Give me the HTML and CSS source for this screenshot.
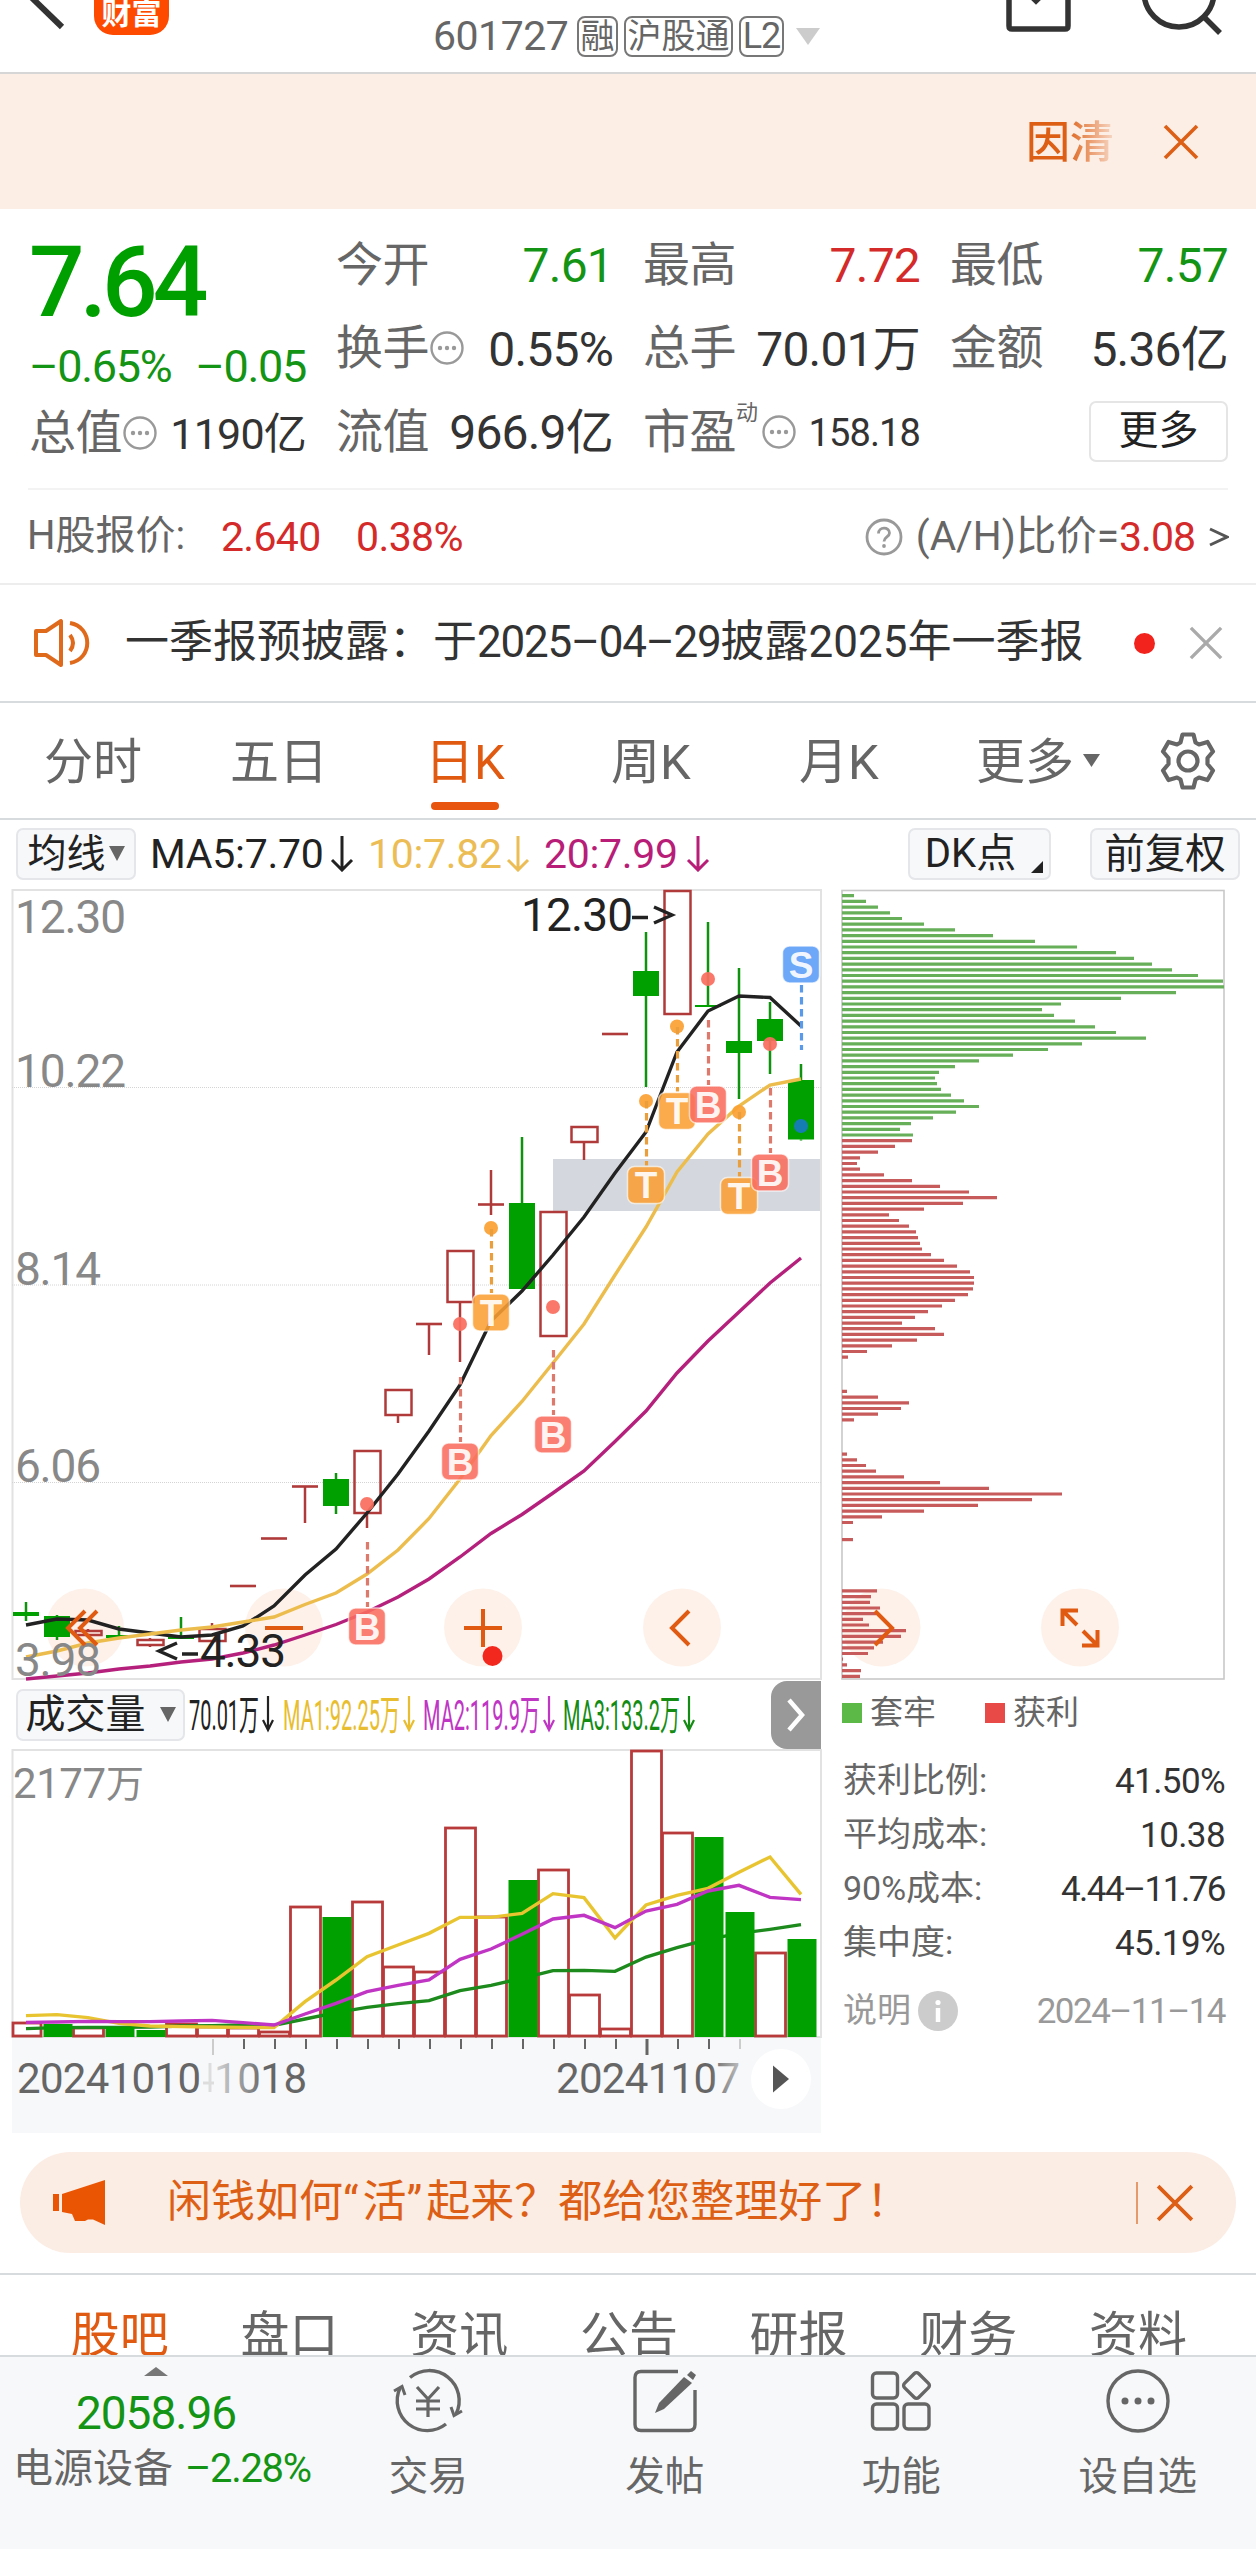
FILE: index.html
```html
<!DOCTYPE html>
<html lang="zh-CN">
<head>
<meta charset="utf-8">
<title>601727</title>
<link rel="stylesheet" href="styles.css">
</head>
<body>
<svg class="defs" aria-hidden="true">
  <symbol id="i-more" viewBox="0 0 34 34"><circle cx="17" cy="17" r="15.5" fill="none" stroke="#999" stroke-width="2.4"/><circle cx="10" cy="17" r="2.2" fill="#999"/><circle cx="17" cy="17" r="2.2" fill="#999"/><circle cx="24" cy="17" r="2.2" fill="#999"/></symbol>
  <symbol id="i-close" viewBox="0 0 36 36"><path d="M2 2L34 34M34 2L2 34" fill="none" stroke="currentColor" stroke-width="3.6"/></symbol>
  <symbol id="i-down" viewBox="0 0 10 10" preserveAspectRatio="none"><path d="M0 0H10L5 10Z" fill="currentColor"/></symbol>
  <symbol id="i-arrow" viewBox="0 0 24 36"><path d="M12 0V33M2 24L12 34L22 24" fill="none" stroke="currentColor" stroke-width="3"/></symbol>
</svg>

<header class="topbar">
  <svg class="back" viewBox="0 0 70 40"><path d="M30 -4L62 27" stroke="#333" stroke-width="6" fill="none"/></svg>
  <span class="logo">财富</span>
  <div class="code">
    <span class="num">601727</span><span class="tag t1">融</span><span class="tag t2">沪股通</span><span class="tag t3">L2</span>
    <svg class="caret"><use href="#i-down"/></svg>
  </div>
  <svg class="actions" viewBox="0 0 230 40" fill="none" stroke="#333" stroke-width="5.500"><path d="M9 -4V26Q9 29 12 29H65Q68 29 68 26V-4"/><path d="M31 -3L36 2L41 -3" stroke-width="4"/><circle cx="179" cy="-8" r="35"/><path d="M203 16L220 33"/></svg>
</header>

<div class="ticker"><span class="ticker-text">因清</span><svg class="close"><use href="#i-close"/></svg></div>

<section class="quote">
  <div class="col">
    <div class="price">7.64</div>
    <div class="change"><span>–0.65%</span><span>–0.05</span></div>
    <div class="cell"><span class="lab">总值<svg class="info"><use href="#i-more"/></svg></span><span class="val v41">1190亿</span></div>
  </div>
  <div class="col">
    <div class="cell"><span class="lab">今开</span><span class="val green">7.61</span></div>
    <div class="cell"><span class="lab">换手<svg class="info"><use href="#i-more"/></svg></span><span class="val">0.55%</span></div>
    <div class="cell"><span class="lab">流值</span><span class="val">966.9亿</span></div>
  </div>
  <div class="col">
    <div class="cell"><span class="lab">最高</span><span class="val red">7.72</span></div>
    <div class="cell"><span class="lab">总手</span><span class="val">70.01万</span></div>
    <div class="cell"><span class="lab">市盈<sup>动</sup><svg class="info"><use href="#i-more"/></svg></span><span class="val v38">158.18</span></div>
  </div>
  <div class="col">
    <div class="cell"><span class="lab">最低</span><span class="val green">7.57</span></div>
    <div class="cell"><span class="lab">金额</span><span class="val">5.36亿</span></div>
    <div class="cell end"><button class="more">更多</button></div>
  </div>
</section>

<section class="hshare">
  <span class="h-lab">H股报价:</span><span class="red h-a">2.640</span><span class="red h-b">0.38%</span>
  <svg class="help" viewBox="0 0 38 38"><circle cx="19" cy="19" r="17" fill="none" stroke="#999" stroke-width="2.8"/><path d="M13.5 15.5C13.5 8.500 24.500 8.500 24.500 15C24.500 19 19 19 19 23.500" fill="none" stroke="#999" stroke-width="2.800"/><circle cx="19" cy="28" r="1.900" fill="#999"/></svg>
  <span class="h-ratio">(A/H)比价=</span><span class="red h-c">3.08</span>
  <svg class="gt" viewBox="0 0 20 20"><path d="M1 2L18 10L1 18" fill="none" stroke="#555" stroke-width="3"/></svg>
</section>

<section class="notice">
  <svg class="speaker" viewBox="0 0 58 50" fill="none" stroke="#e06a1c" stroke-width="4" stroke-linejoin="round"><path d="M3 13H13L28 3V47L13 37H3Z"/><path d="M37 17Q43 25 37 33" stroke-width="4"/><path d="M37 5C60 9 60 41 37 45"/></svg>
  <span class="n-text">一季报预披露：于<span class="date">2025–04–29</span>披露<span class="year">2025</span>年一季报</span>
  <i class="dot"></i><svg class="n-close"><use href="#i-close"/></svg>
</section>

<nav class="tabs">
  <span class="p1">分时</span><span class="p2">五日</span><span class="p3 on">日K</span><span class="p4">周K</span><span class="p5">月K</span><span class="p6">更多</span><svg class="t-caret"><use href="#i-down"/></svg>
  <svg class="gear" viewBox="0 0 60 60" fill="none" stroke="#666" stroke-width="4.200" stroke-linejoin="round"><path d="M24.500 3.500H35.500L37.500 11.500L41 13.500L49.500 11L55 20.500L49.500 27V33L55 39.500L49.500 49L41 46.500L37.500 48.500L35.500 56.500H24.500L22.500 48.500L19 46.500L10.500 49L5 39.500L10.500 33V27L5 20.500L10.500 11L19 13.500L22.500 11.500Z"/><circle cx="30" cy="30" r="9.500"/></svg>
</nav>

<div class="mabar">
  <button class="chip c1">均线<svg><use href="#i-down"/></svg></button>
  <span class="ma k">MA5:7.70<svg><use href="#i-arrow"/></svg></span>
  <span class="ma y">10:7.82<svg><use href="#i-arrow"/></svg></span>
  <span class="ma m">20:7.99<svg><use href="#i-arrow"/></svg></span>
  <button class="chip c2">DK点<svg class="corner" viewBox="0 0 12 12"><path d="M12 0V12H0Z" fill="#222"/></svg></button>
  <button class="chip c3">前复权</button>
</div>

<main class="charts">
  <div class="left">
    <svg id="kline" width="830" height="793" viewBox="0 888 830 793"></svg>
    <div class="volbar">
      <button class="chip c4">成交量<svg><use href="#i-down"/></svg></button>
      <svg class="volma" width="520" height="68" viewBox="186 1681 520 68">
        <g font-size="42">
          <g color="#222"><text x="189" y="1730" textLength="70" lengthAdjust="spacingAndGlyphs" fill="#222">70.01万</text><path class="va" d="M268 1696V1729M263 1720L268 1730L273 1720"/></g>
          <g color="#e8be30"><text x="283" y="1730" textLength="117" lengthAdjust="spacingAndGlyphs" fill="#e8be30">MA1:92.25万</text><path class="va" d="M409 1696V1729M404 1720L409 1730L414 1720"/></g>
          <g color="#bf35c4"><text x="423" y="1730" textLength="117" lengthAdjust="spacingAndGlyphs" fill="#bf35c4">MA2:119.9万</text><path class="va" d="M549 1696V1729M544 1720L549 1730L554 1720"/></g>
          <g color="#148c14"><text x="563" y="1730" textLength="117" lengthAdjust="spacingAndGlyphs" fill="#148c14">MA3:133.2万</text><path class="va" d="M689 1696V1729M684 1720L689 1730L694 1720"/></g>
        </g>
      </svg>
      <button class="next"><svg width="20" height="34" viewBox="0 0 20 34"><path d="M3 2L16 17L3 32" fill="none" stroke="#fff" stroke-width="4.500"/></svg></button>
    </div>
    <svg id="volume" width="830" height="385" viewBox="0 1749 830 385"></svg>
  </div>
  <aside class="right">
    <svg id="chips" width="426" height="793" viewBox="830 888 426 793"></svg>
    <div class="legend"><i class="g"></i><span>套牢</span><i class="r"></i><span>获利</span></div>
    <dl class="facts">
      <div><dt>获利比例:</dt><dd>41.50%</dd></div>
      <div><dt>平均成本:</dt><dd>10.38</dd></div>
      <div><dt>90%成本:</dt><dd class="tight">4.44–11.76</dd></div>
      <div><dt>集中度:</dt><dd>45.19%</dd></div>
      <div class="dim"><dt>说明<svg width="40" height="40" viewBox="0 0 40 40"><circle cx="20" cy="20" r="20" fill="#ccc"/><circle cx="20" cy="11.500" r="2.600" fill="#fff"/><path d="M20 17V31" stroke="#fff" stroke-width="4.500"/></svg></dt><dd class="tight">2024–11–14</dd></div>
    </dl>
  </aside>
</main>

<div class="promo">
  <svg class="horn" viewBox="0 0 54 46" fill="#ea5504"><path d="M0 14H6V31H0ZM9 14L52 0V45L40 39.500H35L32 41H22L19 34L9 32Z"/></svg>
  <span class="p-text">闲钱如何<span class="q">“</span>活<span class="q">”</span>起来？都给您整理好了！</span>
  <i class="bar"></i><svg class="p-close"><use href="#i-close"/></svg>
</div>

<nav class="subtabs"><span class="on">股吧</span><span>盘口</span><span>资讯</span><span>公告</span><span>研报</span><span>财务</span><span>资料</span></nav>

<footer class="dock">
  <div class="index">
    <svg class="up" viewBox="0 0 24 9"><path d="M0 9L12 0L24 9Z" fill="#777"/></svg>
    <div class="i-val">2058.96</div>
    <div class="i-name">电源设备<span>–2.28%</span></div>
  </div>
  <div class="item"><svg viewBox="0 0 76 66" fill="none" stroke="#666" stroke-width="3.400"><path d="M20 9.500A30 30 0 0 1 66 46M56 56A30 30 0 0 1 10 20"/><path d="M4 23L12 18.500L15 27M72 43L64 47.500L61 39" stroke-width="3"/><path d="M27 19L38 31L49 19M38 31V49M26 33H50M26 41H50" stroke-width="3.200"/></svg><span>交易</span></div>
  <div class="item"><svg viewBox="0 0 76 66" fill="none" stroke="#666" stroke-width="3.400"><path d="M51 3.500H14Q8 3.500 8 9.500V56.500Q8 62.500 14 62.500H62Q68 62.500 68 56.500V22"/><path d="M57 9L65 15L37 41L28 45L32 35Z" fill="#666" stroke="none"/><path d="M60 7L64 3L69 7L66 12Z" fill="#666" stroke="none"/></svg><span>发帖</span></div>
  <div class="item"><svg viewBox="0 0 76 66" fill="none" stroke="#666" stroke-width="3.400"><rect x="9.500" y="5" width="25" height="25" rx="4"/><rect x="9.500" y="36" width="25" height="25" rx="4"/><rect x="41" y="36" width="25" height="25" rx="4"/><rect x="43.500" y="7.500" width="20" height="20" rx="3" transform="rotate(45 53.500 17.500)"/></svg><span>功能</span></div>
  <div class="item"><svg viewBox="0 0 76 66" fill="none" stroke="#666" stroke-width="3.400"><circle cx="38" cy="33" r="30"/><g fill="#666" stroke="none"><circle cx="25" cy="33" r="3.500"/><circle cx="38" cy="33" r="3.500"/><circle cx="51" cy="33" r="3.500"/></g></svg><span>设自选</span></div>
</footer>
<script src="chart.js"></script>
</body>
</html>
```
FILE: styles.css
```css
* { box-sizing: border-box; }
body { margin: 0; width: 1256px; height: 2549px; overflow: hidden; background: #fff; color: #333; font-family: Roboto, "Noto Sans CJK SC", sans-serif; }
svg { display: block; flex: none; }
span { white-space: nowrap; }
button { font: inherit; color: #222; padding: 0; }
.defs { position: absolute; width: 0; height: 0; }
.red { color: #d42a2a; }
.green { color: #149414; }

.topbar { height: 74px; border-bottom: 2px solid #d6d6d6; display: flex; align-items: flex-start; overflow: hidden; }
.back { width: 70px; height: 40px; }
.logo { margin-left: 24px; width: 75px; height: 35px; background: #fd4a00; border-radius: 0 0 19px 19px; color: #fff; font-weight: 700; font-size: 30px; line-height: 27px; text-align: center; }
.code { margin-left: 264px; display: flex; align-items: center; height: 73px; font-size: 41px; color: #666; line-height: 73px; }
.num { width: 144px; letter-spacing: -0.5px; }
.tag { height: 41px; line-height: 36px; border: 2px solid #777; border-radius: 8px; font-size: 34px; text-align: center; margin-right: 6px; }
.t1 { width: 41px; }
.t2 { width: 109px; }
.t3 { width: 45px; font-size: 36px; letter-spacing: -1px; }
.caret { width: 24px; height: 17px; color: #ccc; margin-left: 6px; }
.actions { width: 230px; height: 40px; margin-left: 180px; }

.ticker { height: 135px; background: #fceee5; display: flex; align-items: center; color: #dd5f16; padding-left: 1026px; }
.ticker-text { font-size: 44px; font-weight: 500; width: 88px; margin-bottom: 5px; background: linear-gradient(90deg, #dd5f16 45%, rgba(221,95,22,0.15)); -webkit-background-clip: text; color: transparent; }
.close { width: 36px; height: 36px; margin-left: 49px; }

.quote { height: 281px; margin: 0 28px; padding: 14px 0 0 1px; display: flex; gap: 31px; border-bottom: 2px solid #f3f3f3; }
.col { width: 277px; flex: none; margin-right: -1px; }
.col:last-child { width: 278px; }
.price { height: 115px; line-height: 120px; font-size: 98px; font-weight: 500; letter-spacing: -5px; color: #009f00; }
.change { height: 53px; line-height: 58px; font-size: 45px; letter-spacing: -1.300px; color: #149414; display: flex; justify-content: space-between; }
.cell { height: 83.5px; display: flex; align-items: center; justify-content: space-between; font-size: 47px; line-height: 60px; }
.end { justify-content: flex-end; }
.lab { color: #666; display: flex; align-items: center; letter-spacing: -0.5px; }
.info { width: 34px; height: 34px; margin: 0 0 0 1px; }
sup { font-size: 22px; line-height: 22px; align-self: flex-start; width: 24px; }
sup + .info { margin-left: 2px; }
.val { font-size: 48px; letter-spacing: -0.8px; padding-top: 3px; }
.v41 { font-size: 43px; }
.v38 { font-size: 38px; letter-spacing: -0.9px; }
.more { width: 139px; height: 61px; border: 2px solid #e5e5e5; border-radius: 7px; background: #fff; font-size: 40px; line-height: 54px; padding-bottom: 1px; }

.hshare { height: 95px; border-bottom: 2px solid #ededed; display: flex; align-items: center; padding: 0 27px; font-size: 40px; line-height: 60px; color: #666; }
.h-lab { width: 194px; padding-bottom: 2px; }
.h-a { width: 135px; font-size: 41px; letter-spacing: -0.7px; }
.h-b { flex: 1; font-size: 41px; letter-spacing: -0.6px; }
.help { width: 38px; height: 38px; margin-right: 13px; }
.h-ratio { font-size: 40.5px; padding-bottom: 2px; }
.h-c { font-size: 41px; letter-spacing: -1px; margin-right: 14px; }
.gt { width: 20px; height: 20px; }

.notice { height: 118px; border-bottom: 2px solid #d8dbdd; display: flex; align-items: center; padding: 0 33px; }
.speaker { width: 58px; height: 50px; }
.n-text { margin-left: 34px; width: 1010px; font-size: 44px; line-height: 60px; padding-bottom: 2px; }
.date { letter-spacing: -1.200px; }
.dot { width: 21px; height: 21px; border-radius: 50%; background: #f2231d; flex: none; }
.n-close { width: 34px; height: 34px; color: #aaa; margin-left: 34px; }

.tabs { height: 117px; border-bottom: 2px solid #d8dbdd; display: flex; align-items: center; padding-left: 44px; font-size: 49px; color: #666; }
.tabs span { flex: none; line-height: 120px; height: 115px; }
.p1 { width: 186px; }
.p2 { width: 195px; }
.p3 { width: 186px; position: relative; }
.p4 { width: 188px; }
.p5 { width: 177px; }
.p6 { width: 107px; }
.on { color: #e15a11; }
.p3::after { content: ""; position: absolute; left: 6px; bottom: 8px; width: 68px; height: 8px; border-radius: 4px; background: #e8550f; }
.t-caret { width: 17px; height: 13px; color: #666; }
.gear { width: 60px; height: 60px; margin-left: 58px; }

.mabar { height: 68px; display: flex; align-items: center; padding: 0 16px; font-size: 41px; }
.chip { height: 52px; border: 2px solid #e4e6e9; border-radius: 7px; background: #f6f8fa; display: flex; align-items: center; justify-content: center; flex: none; position: relative; line-height: 46px; padding-bottom: 1px; white-space: nowrap; }
.c1 { width: 120px; font-size: 39px; margin-right: 14px; }
.chip svg { color: #666; width: 16px; height: 15px; margin-left: 3px; }
.c2 { width: 143px; font-size: 40px; padding-right: 18px; margin-left: auto; margin-right: 39px; }
.chip .corner { position: absolute; right: 6px; bottom: 5px; width: 12px; height: 12px; }
.c3 { width: 150px; font-size: 40.500px; }
.ma { display: flex; align-items: center; line-height: 70px; letter-spacing: -0.300px; }
.ma svg { width: 24px; height: 36px; margin-left: auto; margin-right: 14px; }
.k { width: 218px; color: #222; }
.y { width: 176px; color: #ecbd55; }
.m { width: 180px; color: #b81d78; }

.charts { display: flex; height: 1247px; }
.left { width: 830px; }
.right { width: 426px; }
.volbar { display: flex; align-items: center; height: 68px; padding-left: 16px; }
.c4 { width: 169px; font-size: 40px; margin-right: 1px; }
.c4 svg { margin-left: 14px; }
.va { fill: none; stroke: currentColor; stroke-width: 2.2; }
.next { width: 50px; height: 68px; margin-left: 65px; background: #999; border: 0; border-radius: 16px 0 0 16px; display: flex; align-items: center; justify-content: center; }

.legend { display: flex; align-items: center; height: 64px; padding-left: 12px; font-size: 33px; color: #666; }
.legend i { width: 20px; height: 20px; margin-right: 8px; }
.legend span { width: 115px; line-height: 50px; padding-bottom: 1px; }
.g { background: #5cb948; }
.r { background: #e84a48; }
.facts { margin: 9px 31px 0 13px; }
.facts div { display: flex; justify-content: space-between; align-items: center; height: 54px; font-size: 34px; }
.facts dt { color: #666; display: flex; align-items: center; line-height: 50px; padding-bottom: 2px; }
.facts dd { margin: 0; font-size: 35px; letter-spacing: -0.6px; }
.facts .tight { letter-spacing: -1.500px; }
.facts .dim { margin-top: 14px; }
.facts .dim dt, .facts .dim dd { color: #999; }
.dim svg { margin: 2px 0 0 7px; }

.promo { height: 101px; margin: 17px 20px 0; border-radius: 51px; background: #fcede4; color: #dd5f16; display: flex; align-items: center; padding-left: 33px; }
.horn { width: 54px; height: 46px; }
.p-text { margin-left: 60px; width: 969px; font-size: 44px; line-height: 60px; padding-bottom: 2px; }
.q { letter-spacing: 4px; }
.bar { width: 2px; height: 42px; background: #e59a6c; }
.p-close { width: 38px; height: 38px; margin-left: 18px; }

.subtabs { margin-top: 20px; height: 84px; border-top: 2px solid #d8dbdd; border-bottom: 2px solid #d8dbdd; overflow: hidden; display: flex; padding-left: 35px; font-size: 49px; line-height: 122px; color: #666; }
.subtabs span { width: 169.700px; text-align: center; flex: none; }

.dock { height: 192px; background: #f7f8fa; display: flex; }
.index { width: 310px; padding-top: 10px; }
.up { width: 24px; height: 9px; margin-left: 144px; }
.i-val { height: 73px; line-height: 74px; font-size: 46px; letter-spacing: -1px; color: #149414; text-align: center; padding-left: 2px; }
.i-name { margin-left: 13px; height: 40px; line-height: 40px; font-size: 40px; color: #666; white-space: nowrap; }
.i-name span { color: #149414; margin-left: 12px; letter-spacing: -1.300px; }
.item { width: 236.500px; display: flex; flex-direction: column; align-items: center; font-size: 39.500px; color: #666; padding-top: 11px; }
.item svg { width: 76px; height: 66px; }
.item span { margin-top: 18px; line-height: 50px; }
```
FILE: chart.js
```js
const NS = 'http://www.w3.org/2000/svg';
const X = i => 26 + 31 * i;
const add = (root, tag, attrs, text) => {
  const el = document.createElementNS(NS, tag);
  for (const k in attrs) el.setAttribute(k, attrs[k]);
  if (text) el.textContent = text;
  root.appendChild(el);
  return el;
};
const line = (root, ys, color, w) => add(root, 'polyline', {
  points: ys.map((y, i) => X(i) + ',' + y).join(' '), fill: 'none', stroke: color, 'stroke-width': w
});
const RED = '#b03a3a', GREEN = '#00a000';

/* Daily candles */
const k = document.getElementById('kline');
add(k, 'rect', { x: 12.5, y: 890, width: 808.5, height: 789, fill: 'none', stroke: '#e2e2e2', 'stroke-width': 2 });
[1087.5, 1285, 1482.5].forEach(y => add(k, 'path', { d: `M12 ${y}H821`, stroke: '#d4d4d4', 'stroke-width': 1, 'stroke-dasharray': '1 1' }));
add(k, 'rect', { x: 553, y: 1159, width: 267, height: 52, fill: '#d4d8de' });
[85, 284, 483, 682].forEach(x => add(k, 'circle', { cx: x, cy: 1627.5, r: 39, fill: '#fef1ea' }));

/* [colour, high, bodyTop, bodyBottom, low]; equal body values draw a flat bar */
const candles = [
  ['g', 1602, 1612, 1616, 1621], ['g', 1615, 1616, 1637, 1640], ['r', 1629, 1631, 1635, 1637], ['g', 1626, 1635, 1638, 1638],
  ['r', 1638, 1640, 1645, 1647], ['g', 1617, 1636, 1639, 1639], ['r', 1623, 1629, 1641, 1641], ['r', 1586, 1586, 1586, 1586],
  ['r', 1538.5, 1538.5, 1538.5, 1538.5], ['r', 1486.5, 1486.5, 1486.5, 1523], ['g', 1473, 1479, 1506, 1514], ['r', 1451, 1451, 1513, 1528],
  ['r', 1390, 1390, 1415, 1423], ['r', 1324, 1324, 1324, 1355], ['r', 1251, 1251, 1302, 1362], ['r', 1170, 1204.5, 1204.5, 1215],
  ['g', 1137, 1203, 1289, 1289], ['r', 1212, 1212, 1336, 1336], ['r', 1127, 1127, 1142, 1160], ['r', 1034, 1034, 1034, 1034],
  ['g', 932, 971, 996, 1087], ['r', 891, 891, 1014, 1014], ['g', 922, 1005, 1007, 1007], ['g', 968, 1041, 1053, 1099],
  ['g', 1002, 1019, 1041, 1074], ['g', 1064, 1080, 1139.5, 1140.5]
];
candles.forEach(([c, hi, t, b, lo], i) => {
  const x = X(i), col = c === 'r' ? RED : '#0f930f';
  if (hi < t) add(k, 'path', { d: `M${x} ${hi}V${t}`, stroke: col, 'stroke-width': 2.5 });
  if (lo > b) add(k, 'path', { d: `M${x} ${b}V${lo}`, stroke: col, 'stroke-width': 2.5 });
  if (t === b) add(k, 'path', { d: `M${x - 13} ${t}h26`, stroke: col, 'stroke-width': 2.6 });
  else if (c === 'r') add(k, 'rect', { x: x - 12.5, y: t, width: 26, height: b - t, fill: 'none', stroke: RED, 'stroke-width': 2.5 });
  else add(k, 'rect', { x: x - 13, y: t, width: 26, height: b - t, fill: GREEN });
});

line(k, [1625, 1619, 1620, 1629, 1633, 1637, 1635, 1626, 1606, 1575, 1549, 1513, 1474, 1431, 1385, 1321, 1291, 1255, 1217, 1173, 1132, 1052, 1011, 996, 997.5, 1026], '#222', 3.4);
line(k, [1657, 1651, 1643, 1638, 1634, 1630, 1627, 1622, 1617, 1604.5, 1593, 1574, 1550, 1518.5, 1479, 1435.5, 1401.5, 1363, 1324, 1275, 1227, 1172, 1134, 1106, 1085, 1079], '#ecbd4c', 3.4);
line(k, [1679, 1676, 1673, 1669, 1666, 1662, 1659, 1653, 1645, 1635, 1624.5, 1612, 1597, 1579, 1557, 1533.5, 1514.5, 1493, 1471, 1441.5, 1411, 1373, 1341, 1312, 1283, 1258], '#b5207c', 3.4);

/* Trade marks: [letter, index, badgeTop, stalkFrom, dotY] */
const tone = { B: ['#fa6e5f', '#dd7a6c'], T: ['#fba034', '#ea9f3c'], S: ['#5a9cf8', '#5a9ae8'] };
[['T', 15, 1294, 1229, 1228], ['T', 20, 1166.5, 1101, 1101], ['T', 21, 1092.5, 1027, 1026.5], ['T', 23, 1177.5, 1112, 1112],
 ['B', 11, 1608, 1542, 1504], ['B', 14, 1443, 1377, 1324], ['B', 17, 1416, 1350, 1307], ['B', 22, 1086, 1020, 979],
 ['B', 24, 1154, 1088, 1044], ['S', 25, 946, 1050, 1126]].forEach(([m, i, top, from, dot]) => {
  const x = X(i), [fill, dash] = tone[m];
  add(k, 'circle', { cx: x, cy: dot, r: 7, fill: m === 'S' ? '#187bc0' : fill, opacity: 0.93 });
  add(k, 'path', { d: m === 'S' ? `M${x + .5} 985V${from}` : `M${x + .5} ${from}V${top - 1}`, stroke: dash, 'stroke-width': 3.2, 'stroke-dasharray': '7.5 4.5' });
  add(k, 'rect', { x: x - 18.5, y: top, width: 37, height: 37, rx: 7, fill, opacity: 0.88, stroke: '#fff', 'stroke-opacity': 0.7, 'stroke-width': 1.5 });
  add(k, 'text', { x, y: top + 31.5, 'text-anchor': 'middle', 'font-size': 37, 'font-family': 'Liberation Sans', 'font-weight': 700, fill: '#fff', 'fill-opacity': 0.92 }, m);
});

const label = (root, x, y, w, s, fill, size) => add(root, 'text', { x, y, textLength: w, 'font-size': size || 46, fill }, s);
label(k, 15, 933, 111, '12.30', '#888');
label(k, 15, 1087, 111, '10.22', '#888');
label(k, 15, 1285, 86, '8.14', '#888');
label(k, 15, 1482, 86, '6.06', '#888');
label(k, 15, 1676, 86, '3.98', '#888');
label(k, 521, 931, 112, '12.30', '#222');
add(k, 'path', { d: 'M632 917.500H648M654 907L672 915L654 923', fill: 'none', stroke: '#222', 'stroke-width': 3.4 });
add(k, 'path', { d: 'M177 1643L159 1651L177 1659M182 1654H198', fill: 'none', stroke: '#222', 'stroke-width': 3.4 });
label(k, 200, 1667, 86, '4.33', '#222');

const icon = (root, d) => add(root, 'path', { d, fill: 'none', stroke: '#e05a12', 'stroke-width': 4 });
icon(k, 'M85 1611L68 1628L85 1645M97 1611L80 1628L97 1645');
icon(k, 'M265 1628H303');
icon(k, 'M464 1628H502M483 1609V1647');
icon(k, 'M689 1611L672 1628L689 1645');
add(k, 'circle', { cx: 492.5, cy: 1656, r: 10, fill: '#f2281e' });

/* Cost distribution */
const c = document.getElementById('chips');
[881.5, 1080].forEach(x => add(c, 'circle', { cx: x, cy: 1627.5, r: 39, fill: '#fef1ea' }));
add(c, 'rect', { x: 842, y: 890.5, width: 382, height: 788.5, fill: 'none', stroke: '#c8c8c8', 'stroke-width': 1.6 });
const runs = [
  [0, '#67af58', [12, 24, 36, 48, 60, 82, 113, 151, 193, 235, 274, 292, 310, 330, 356, 381, 382, 334, 279, 219, 200, 212, 233, 253, 274, 304, 240, 206, 171, 137, 113, 97, 93, 95, 99, 109, 122, 137, 114, 91, 69, 58, 71]],
  [43, '#c75b5b', [70, 53, 36, 18, 15, 18, 42, 70, 98, 127, 155, 121, 82, 47, 57, 67, 74, 76, 78, 80, 89, 102, 115, 128, 132, 132, 131, 126, 113, 100, 86, 73, 60, 93, 102, 75, 50, 25, 6]],
  [87, '#c75b5b', [5, 36, 67, 59, 36, 12]],
  [98, '#c75b5b', [5, 15, 24, 34, 62, 98, 147, 220, 190, 136, 82, 40, 11]],
  [113, '#c75b5b', [11]],
  [122, '#c75b5b', [35, 29, 28, 38, 34, 21, 27, 64, 59, 41, 32, 26, 1, 5, 19, 18]]
];
runs.forEach(([start, stroke, ws]) => add(c, 'path', {
  d: ws.map((w, i) => `M842 ${(895.7 + 5.698 * (start + i)).toFixed(1)}h${w}`).join(''), stroke, 'stroke-width': 3.2
}));
icon(c, 'M875 1611L892 1628L875 1645');
icon(c, 'M1078 1610.500H1062.500V1626M1063 1611L1077 1625M1082 1645.500H1097.500V1630M1097 1645L1083 1631');

/* Volume */
const v = document.getElementById('volume');
add(v, 'rect', { x: 12, y: 2038, width: 809, height: 95, fill: '#f7f8fa' });
add(v, 'rect', { x: 12.5, y: 1750, width: 808.5, height: 287, fill: 'none', stroke: '#e2e2e2', 'stroke-width': 2 });
label(v, 13, 1798, 93, '2177', '#888', 42);
add(v, 'text', { x: 106, y: 1797, 'font-size': 38, fill: '#888' }, '万');
const vol = 'r2023 g2024 r2028 g2027 g2030 r2024 r2027 r2028 r2032 r1907 g1917 r1902 r1967 r1972 r1828 r1917 g1880 r1870 r1995 r2029 r1751 r1833 g1837 g1912 r1953 g1939'.split(' ');
const px = a => a.map(n => 1660 + n / 3);
const bar = (s, i) => {
  const y = +s.slice(1), x = i ? X(i) - 14.5 : 13, w = (i ? 30 : 28);
  if (s[0] === 'r') add(v, 'rect', { x, y, width: w, height: 2036 - y, fill: 'none', stroke: '#b93a3a', 'stroke-width': 2.8 });
  else add(v, 'rect', { x: x + 1, y, width: w - 1, height: 2037 - y, fill: GREEN });
};
vol.forEach((s, i) => { if (s[0] === 'r') bar(s, i); });
line(v, px([1106, 1103, 1102, 1102, 1101, 1098, 1097, 1095, 1096, 1077, 1058, 1042, 1031, 1022, 992, 976, 955, 932, 931, 934, 891, 863, 838, 820, 808, 794]), '#1c8a1c', 3.4);
vol.forEach((s, i) => { if (s[0] === 'g') bar(s, i); });
line(v, px([1067, 1064, 1073, 1090, 1098, 1100, 1101, 1102, 1103, 1025, 960, 890, 855, 820, 772, 772, 760, 701, 713, 834, 735, 706, 685, 637, 591, 703]), '#e8c530', 3.4);
line(v, px([1087, 1086, 1084, 1085, 1085, 1083, 1081, 1088, 1095, 1062, 1030, 995, 976, 960, 898, 867, 823, 777, 766, 803, 753, 733, 693, 676, 712, 719]), '#c035c4', 3.4);
for (let i = 6; i < 24; i++) {
  const big = i === 6 || i === 20;
  add(v, 'path', { d: `M${X(i) + 1} 2039V${big ? 2055 : 2049}`, stroke: i === 6 || i === 23 ? '#ccc' : '#666', 'stroke-width': i === 20 ? 3 : 2 });
}
const defs = add(v, 'defs', {});
const fade = (id, x1, x2, a, b) => {
  const g = add(defs, 'linearGradient', { id, gradientUnits: 'userSpaceOnUse', x1, x2, y1: 0, y2: 0 });
  add(g, 'stop', { offset: 0, 'stop-color': '#666', 'stop-opacity': a });
  add(g, 'stop', { offset: 1, 'stop-color': '#666', 'stop-opacity': b });
};
fade('fl', 206, 265, 0.1, 1);
fade('fr', 710, 745, 1, 0.3);
label(v, 17, 2093, 184, '20241010', '#666', 42);
label(v, 214, 2093, 93, '1018', 'url(#fl)', 42);
add(v, 'path', { d: 'M210 2063V2092M203 2083H214', fill: 'none', stroke: '#ddd', 'stroke-width': 3 });
label(v, 556, 2093, 184, '20241107', 'url(#fr)', 42);
add(v, 'circle', { cx: 781, cy: 2079, r: 30, fill: '#fff' });
add(v, 'path', { d: 'M773 2065.500L789 2079L773 2092.500Z', fill: '#555' });
```
